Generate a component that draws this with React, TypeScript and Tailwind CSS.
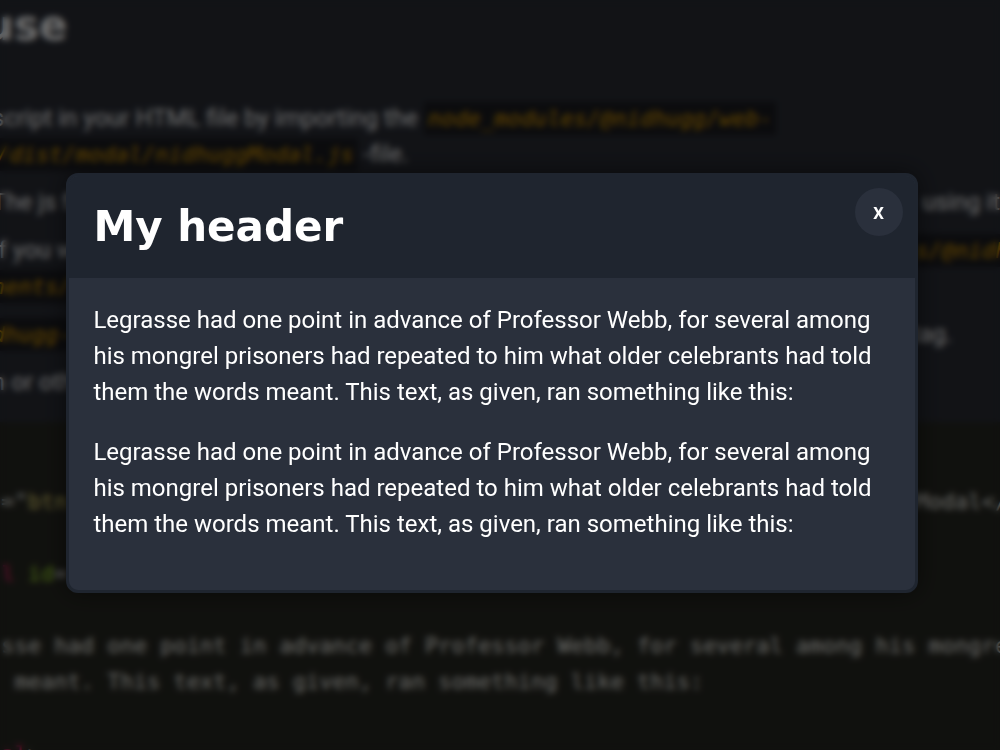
import type { ReactNode } from "react";

function InlineCode({ children, wrapped = false }: { children: ReactNode; wrapped?: boolean }) {
  return (
    <code
      className={`${wrapped ? "pr-1" : "px-1"} bg-[#1a1b20] py-1 font-['DejaVu_Sans_Mono',monospace] text-[22px] leading-none text-[#e6a400] italic`}
    >
      {children}
    </code>
  );
}

function Split({ left, right }: { left: ReactNode; right?: ReactNode }) {
  return (
    <div className="flex h-9 justify-between whitespace-pre">
      <span>{left}</span>
      <span>{right}</span>
    </div>
  );
}

function Instructions() {
  return (
    <section className="pt-0.5 pb-[22px]">
      <h2 className="-ml-4 font-['DejaVu_Sans',sans-serif] text-[42px] leading-[48px] font-bold">use</h2>
      <ul className="-ml-2 flex flex-col gap-3 pt-[50px] text-2xl leading-9">
        <li className="whitespace-pre">
          <div className="h-9">
            script in your HTML file by importing the <InlineCode>node_modules/@nidhugg/web-</InlineCode>
          </div>
          <div className="h-9">
            <InlineCode>/dist/modal/nidhuggModal.js</InlineCode> -file.
          </div>
        </li>
        <li>
          <Split left="The js file" right="using it" />
        </li>
        <li className="-mr-3">
          <Split left="If you want" right={<InlineCode wrapped>s/@nidh</InlineCode>} />
          <Split left={<InlineCode wrapped>nents/</InlineCode>} />
        </li>
        <li className="pr-12">
          <Split left={<InlineCode wrapped>dhugg-</InlineCode>} right="tag." />
        </li>
        <li>
          <Split left="n or other" />
        </li>
      </ul>
    </section>
  );
}

function CodeSample() {
  return (
    <pre className="flex-1 overflow-hidden bg-[#272822] pt-[62px] font-['DejaVu_Sans_Mono',monospace] text-[22px] leading-9 text-[#f8f8f2]">
      <code className="-mr-2 -ml-3 block font-['DejaVu_Sans_Mono',monospace]">
        <Split
          left={
            <>
              <span className="text-[#e6db74]">s</span>="<span className="text-[#e6db74]">btn</span>
            </>
          }
          right="Modal</"
        />
        {"\n"}
        <span className="text-[#f92672]">al</span> <span className="text-[#a6e22e]">id</span>={"\n\n"}
        asse had one point in advance of Professor Webb, for several among his mongrel{"\n"}
        s meant. This text, as given, ran something like this:{"\n\n"}
        <span className="text-[#f92672]">dal</span>&gt;
      </code>
    </pre>
  );
}

function Modal() {
  return (
    <div
      role="dialog"
      aria-labelledby="modal-title"
      className="relative w-[86.5%] overflow-hidden rounded-xl border-3 border-[#1f252f] bg-[#2a303c] shadow-[0_0_24px_rgba(0,0,0,0.5)]"
    >
      <header className="bg-[#1f252f] px-6 py-[27px]">
        <h1 id="modal-title" className="font-['DejaVu_Sans',sans-serif] text-[42px] leading-[48px] font-bold">
          My header
        </h1>
        <button
          type="button"
          className="absolute top-3 right-3 flex size-12 items-center justify-center rounded-full bg-[#2a303c] text-[22px] leading-none font-medium"
        >
          x
        </button>
      </header>
      <div className="flex flex-col gap-6 px-6 pt-6 pb-12 text-2xl leading-9">
        <p>
          Legrasse had one point in advance of Professor Webb, for several among his mongrel prisoners had repeated to
          him what older celebrants had told them the words meant. This text, as given, ran something like this:
        </p>
        <p>
          Legrasse had one point in advance of Professor Webb, for several among his mongrel prisoners had repeated to
          him what older celebrants had told them the words meant. This text, as given, ran something like this:
        </p>
      </div>
    </div>
  );
}

export default function App() {
  return (
    <div className="relative h-screen overflow-hidden bg-[#2a2d35] font-['Roboto',sans-serif] text-white">
      <main className="flex h-full flex-col overflow-hidden">
        <Instructions />
        <CodeSample />
      </main>
      <div className="absolute inset-0 flex items-center justify-center bg-black/57 pt-4 pr-4 backdrop-blur-[3px]">
        <Modal />
      </div>
    </div>
  );
}
